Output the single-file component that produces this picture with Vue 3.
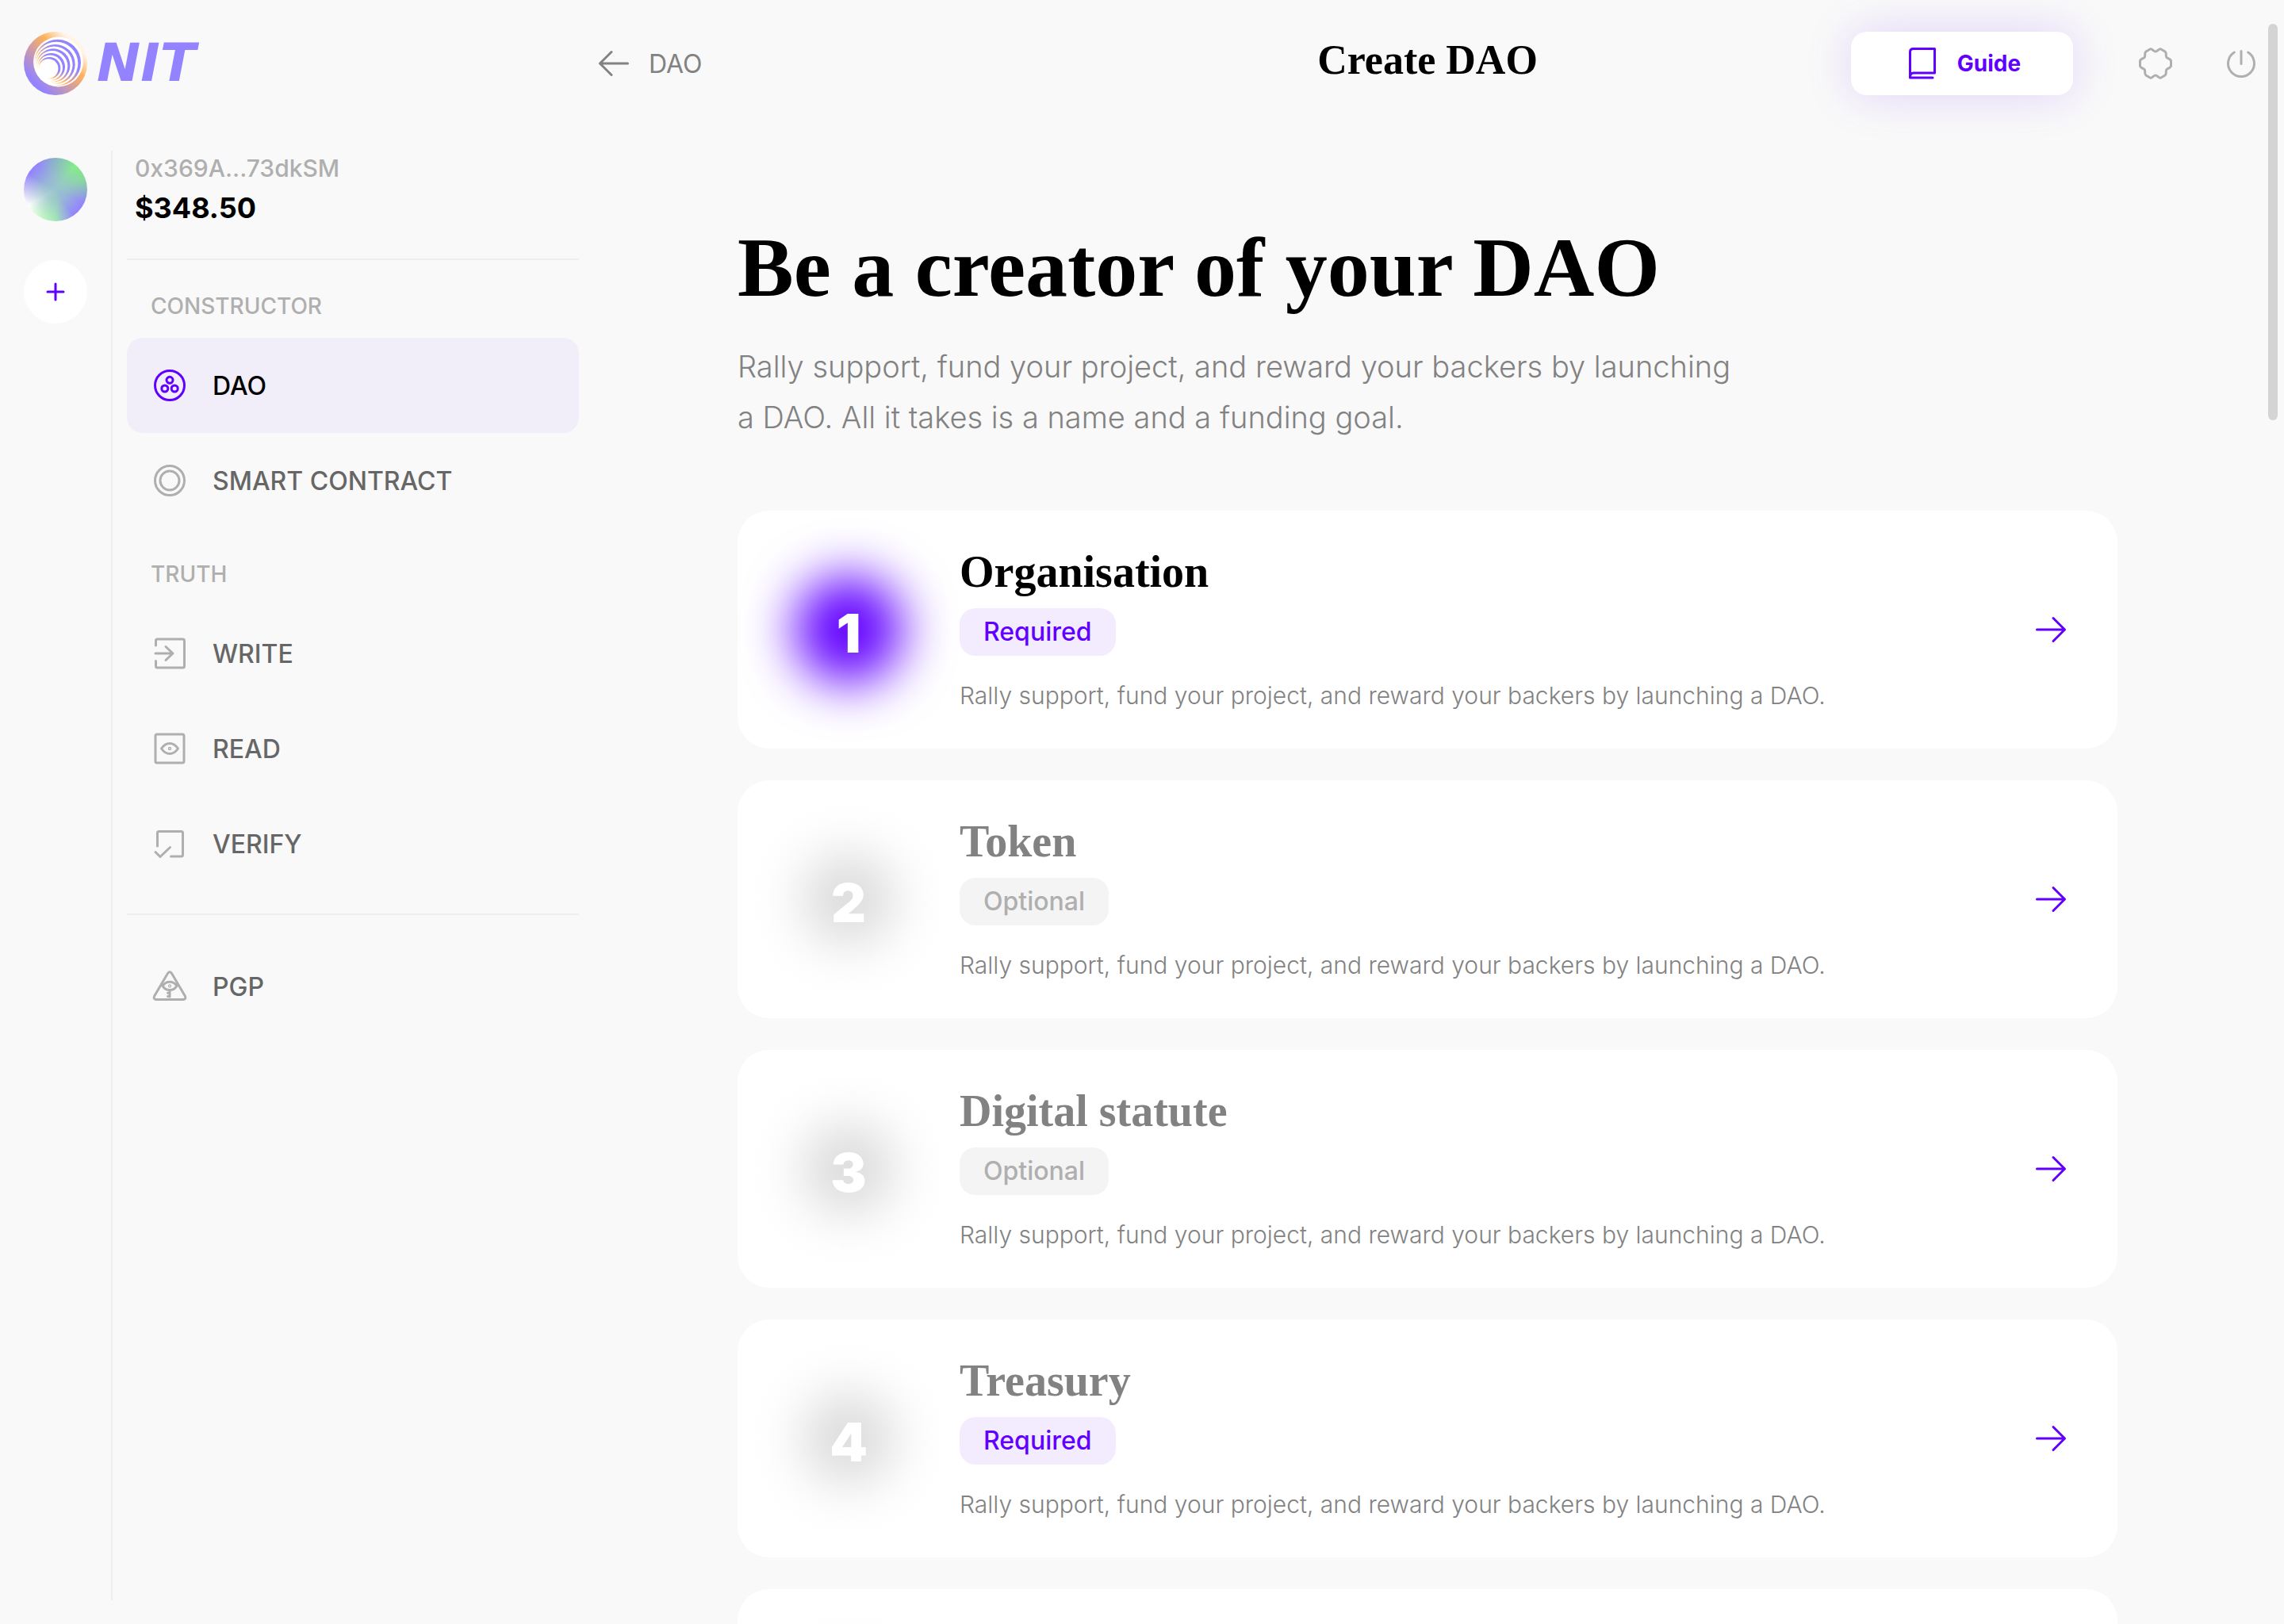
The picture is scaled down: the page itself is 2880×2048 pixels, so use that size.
<script setup>
const navGroups = [
  {
    label: 'CONSTRUCTOR',
    items: [
      { name: 'DAO', icon: 'dao', active: true },
      { name: 'SMART CONTRACT', icon: 'contract' },
    ],
  },
  {
    label: 'TRUTH',
    items: [
      { name: 'WRITE', icon: 'write' },
      { name: 'READ', icon: 'read' },
      { name: 'VERIFY', icon: 'verify' },
    ],
  },
]

const icons = {
  dao: 'M24 5.5a18.5 18.5 0 1 0 0 37a18.5 18.5 0 1 0 0-37zM24 13.3a4 4 0 1 0 0 8a4 4 0 1 0 0-8zM17.8 24a4 4 0 1 0 0 8a4 4 0 1 0 0-8zM30.2 24a4 4 0 1 0 0 8a4 4 0 1 0 0-8z',
  contract: 'M24 5.5a18.5 18.5 0 1 0 0 37a18.5 18.5 0 1 0 0-37zM24 12a12 12 0 1 0 0 24a12 12 0 1 0 0-24z',
  write: 'M6.5 14V8q0-2 2-2h32q2 0 2 2v32q0 2-2 2h-32q-2 0-2-2v-6.500M6 24h22M19 15.500l9 8.500-9 8.500',
  read: 'M8 6h32q2 0 2 2v32q0 2-2 2H8q-2 0-2-2V8q0-2 2-2zM13.500 24Q18 17.500 24 17.500T34.500 24Q30 30.500 24 30.500T13.500 24zM24 23.300a.7.7 0 1 0 0 1.400a.7.7 0 1 0 0-1.400z',
  verify: 'M8.500 27V10.500q0-2 2-2h28q2 0 2 2v27.500q0 2-2 2H25.500M6 34.500l6 6 12.500-12',
  pgp: 'M21.500 7.500q2.500-3.600 5 0L43.300 36q1.800 4-2 4.500H6.700q-3.800-.500-2-4.500zM15 23.300Q18.500 18.200 24 18.200T33 23.300Q29.500 28.600 24 28.600T15 23.300zM24 22.800a.6.6 0 1 0 0 1.200a.6.6 0 1 0 0-1.200zM24 29v8M24 32.300h-2.500M24 36.500h-2.500',
}

const summary = 'Rally support, fund your project, and reward your backers by launching a DAO.'
const steps = [
  { title: 'Organisation', required: true, active: true },
  { title: 'Token' },
  { title: 'Digital statute' },
  { title: 'Treasury', required: true },
]

// Crescents of the logo mark, from the widest to the narrowest: [cx, cy, r, inner cx, inner cy, inner r]
const rings = [
  [42.7, 39, 29.3, 41, 40, 27.3],
  [39.7, 41, 25, 38.3, 41.7, 23.3],
  [37.2, 42.5, 21.2, 35.8, 43.5, 19.5],
  [34.7, 44.3, 17.3, 33.3, 45.3, 15.7],
  [32.5, 45.8, 13.8, 31.2, 46.5, 12.2],
]
</script>

<template>
  <div class="app">
    <aside class="sidebar">
      <a class="logo" href="#">
        <svg width="80" height="80" viewBox="0 0 80 80" aria-hidden="true">
          <defs>
            <linearGradient id="band" gradientUnits="userSpaceOnUse" x1="15" y1="65" x2="64" y2="16">
              <stop offset="0" stop-color="#9383ff" />
              <stop offset="0.7" stop-color="#ffb15c" />
              <stop offset="1" stop-color="#fff4e8" />
            </linearGradient>
            <linearGradient id="ring" x1="0.8" y1="0.2" x2="0.15" y2="0.85">
              <stop offset="0" stop-color="#9383ff" />
              <stop offset="0.25" stop-color="#9383ff" />
              <stop offset="0.65" stop-color="#ffb15c" />
              <stop offset="0.92" stop-color="#ffffff" />
            </linearGradient>
          </defs>
          <circle cx="40" cy="40" r="40" fill="url(#band)" />
          <circle cx="43.5" cy="38" r="31.4" fill="#fff" />
          <g v-for="(r, i) in rings" :key="i">
            <circle :cx="r[0]" :cy="r[1]" :r="r[2]" fill="url(#ring)" />
            <circle :cx="r[3]" :cy="r[4]" :r="r[5]" fill="#fff" />
          </g>
        </svg>
        <span class="wordmark">NIT</span>
      </a>

      <div class="panel">
        <div class="rail">
          <button class="avatar" type="button" aria-label="Wallet"></button>
          <button class="add" type="button" aria-label="Add wallet">
            <svg class="icon" viewBox="0 0 48 48"><path d="M24 14v20M14 24h20" /></svg>
          </button>
        </div>

        <div class="menu">
          <div class="wallet">
            <div class="address">0x369A...73dkSM</div>
            <div class="balance">$348.50</div>
          </div>
          <nav>
            <section v-for="g in navGroups" :key="g.label">
              <h2 class="group-label">{{ g.label }}</h2>
              <a v-for="n in g.items" :key="n.name" href="#" class="nav-item" :class="{ active: n.active }">
                <svg class="icon" viewBox="0 0 48 48"><path :d="icons[n.icon]" /></svg>
                <span>{{ n.name }}</span>
              </a>
            </section>
            <section class="extra">
              <a href="#" class="nav-item">
                <svg class="icon" viewBox="0 0 48 48"><path :d="icons.pgp" /></svg>
                <span>PGP</span>
              </a>
            </section>
          </nav>
        </div>
      </div>
    </aside>

    <main class="main">
      <header class="topbar">
        <a class="back" href="#">
          <svg class="icon" viewBox="0 0 48 48"><path d="M41.500 24H6.500M21 9.500L6.500 24L21 38.500" /></svg>
          <span>DAO</span>
        </a>
        <div class="page-name">Create DAO</div>
        <div class="actions">
          <button class="guide" type="button">
            <svg class="icon" viewBox="0 0 48 48">
              <path d="M8.500 42V9.500q0-4 4-4h27V36H13q-4.500 0-4.500 5M8.500 42h28.500" />
            </svg>
            <span>Guide</span>
          </button>
          <button class="tool settings" type="button" aria-label="Settings">
            <svg class="icon" viewBox="0 0 48 48">
              <path d="M24 9C26.500 9 28 5.300 30.500 5.800L36 9C38.500 11 36.500 14 37.800 16.200C39.500 18 43.500 18.500 43.500 21V27C43.500 29.500 39.500 30 37.800 31.800C36.500 34 38.500 37 36 39L30.500 42.200C28 42.700 26.500 39 24 39C21.500 39 20 42.700 17.500 42.200L12 39C9.500 37 11.500 34 10.200 31.800C8.500 30 4.500 29.500 4.500 27V21C4.500 18.500 8.500 18 10.200 16.200C11.500 14 9.500 11 12 9L17.500 5.800C20 5.300 21.500 9 24 9z" />
            </svg>
          </button>
          <button class="tool" type="button" aria-label="Log out">
            <svg class="icon" viewBox="0 0 48 48">
              <path d="M15.300 10A16.500 16.500 0 1 0 32.700 10M24 8.500v16" />
            </svg>
          </button>
        </div>
      </header>

      <div class="content">
        <h1>Be a creator of your DAO</h1>
        <p class="intro">
          Rally support, fund your project, and reward your backers by launching
          <br />a DAO. All it takes is a name and a funding goal.
        </p>

        <div class="steps">
          <a v-for="(s, i) in steps" :key="s.title" href="#" class="card" :class="{ active: s.active }">
            <div class="badge-number"><span>{{ i + 1 }}</span></div>
            <div class="details">
              <h3>{{ s.title }}</h3>
              <span class="tag" :class="{ required: s.required }">{{ s.required ? 'Required' : 'Optional' }}</span>
              <p>{{ summary }}</p>
            </div>
            <svg class="icon go" viewBox="0 0 48 48"><path d="M6.500 24h35M27 9.500L41.500 24L27 38.500" /></svg>
          </a>
          <div class="card">
            <div class="badge-number"></div>
          </div>
        </div>
      </div>
    </main>

    <div class="scroll-thumb"></div>
  </div>
</template>

<style>
body {
  margin: 0;
  background: #f9f9f9;
}
</style>

<style scoped>
* {
  box-sizing: border-box;
}
.app {
  position: relative;
  display: flex;
  height: 100vh;
  overflow: hidden;
  background: #f9f9f9;
  color: #000;
  font-family: Inter, sans-serif;
}
a {
  color: inherit;
  text-decoration: none;
}
button {
  padding: 0;
  border: 0;
  font: inherit;
  cursor: pointer;
}
h1,
h2,
h3,
p {
  margin: 0;
}
.icon {
  display: block;
  flex: none;
  width: 48px;
  height: 48px;
  fill: none;
  stroke: currentColor;
  stroke-width: 3;
  stroke-linecap: round;
  stroke-linejoin: round;
}

/* Sidebar */
.sidebar {
  display: flex;
  flex: none;
  flex-direction: column;
  width: 730px;
  padding: 0 0 30px 30px;
}
.logo {
  display: flex;
  align-items: center;
  gap: 12px;
  height: 160px;
  margin-bottom: 30px;
}
.wordmark {
  color: #9383ff;
  font: italic 700 66px/80px "DejaVu Sans", sans-serif;
}
.panel {
  display: flex;
  flex: 1;
}
.rail {
  display: flex;
  flex-direction: column;
  gap: 49px;
  width: 112px;
  padding-top: 9px;
  border-right: 2px solid #eee;
}
.avatar,
.add {
  width: 80px;
  height: 80px;
  border-radius: 50%;
}
.avatar {
  background:
    radial-gradient(circle, #99c4cc 0%, rgba(153, 196, 204, 0.8) 25%, rgba(153, 196, 204, 0) 70%),
    conic-gradient(#8ab4c4 0deg, #84f084 40deg, #86dc98 70deg, #9383ff 115deg, #9383ff 145deg, #a4e8b4 180deg, #c2f8c2 205deg, #fff 240deg, #d8d0fa 265deg, #9383ff 300deg, #9383ff 325deg, #8ab4c4 360deg);
}
.add {
  display: grid;
  place-items: center;
  background: #fff;
  color: #6100ff;
}
.menu {
  flex: 1;
  margin-left: 18px;
}
.wallet {
  padding: 0 10px 36px;
  border-bottom: 2px solid #eee;
}
.address {
  color: #afafaf;
  font-size: 30px;
  font-weight: 500;
  line-height: 44px;
}
.balance {
  font-size: 36px;
  font-weight: 700;
  line-height: 56px;
}
.group-label {
  padding: 38px 30px 20px;
  color: #afafaf;
  font-size: 28px;
  font-weight: 500;
  line-height: 40px;
}
.nav-item {
  display: flex;
  align-items: center;
  gap: 30px;
  height: 120px;
  padding: 0 30px;
  border-radius: 20px;
  color: #666;
  font-size: 32px;
  font-weight: 500;
}
.nav-item .icon {
  color: #afafaf;
}
.nav-item.active {
  background: #f1edf9;
  color: #000;
}
.nav-item.active .icon {
  color: #6100ff;
}
.extra {
  margin-top: 28px;
  padding-top: 30px;
  border-top: 2px solid #eee;
}

/* Top bar */
.main {
  flex: 1;
  min-width: 0;
  padding-right: 10px;
}
.topbar {
  display: grid;
  grid-template-columns: 1fr auto 1fr;
  align-items: center;
  height: 160px;
  padding: 0 20px;
}
.back {
  display: flex;
  align-items: center;
  gap: 20px;
  color: #828282;
  font-size: 32px;
}
.page-name {
  padding-bottom: 8px;
  font: 700 52px/64px "Liberation Serif", serif;
}
.actions {
  display: flex;
  align-items: center;
  justify-content: flex-end;
}
.guide {
  display: flex;
  align-items: center;
  justify-content: center;
  gap: 20px;
  width: 280px;
  height: 80px;
  border-radius: 20px;
  background: #fff;
  box-shadow: 0 0 60px rgba(97, 0, 255, 0.16);
  color: #6100ff;
  font-size: 28px;
  font-weight: 700;
}
.tool {
  margin-left: 60px;
  background: none;
  color: #afafaf;
}
.settings {
  margin-left: 80px;
}

/* Content */
.content {
  max-width: 1740px;
  margin: 0 auto;
  padding-top: 112px;
}
h1 {
  font: 700 106px/132px "Liberation Serif", serif;
}
.intro {
  margin-top: 26px;
  color: #828282;
  font-size: 38px;
  font-weight: 300;
  line-height: 64px;
}
.steps {
  display: flex;
  flex-direction: column;
  gap: 40px;
  margin-top: 86px;
}
.card {
  display: flex;
  align-items: center;
  min-height: 300px;
  padding-right: 60px;
  border-radius: 40px;
  background: #fff;
}
.badge-number {
  position: relative;
  display: grid;
  flex: none;
  place-items: center;
  width: 280px;
  padding-top: 8px;
  color: #fff;
  font-size: 68px;
  font-weight: 900;
  line-height: 72px;
}
.badge-number::before {
  position: absolute;
  inset: 0;
  width: 116px;
  height: 116px;
  margin: auto;
  border-radius: 50%;
  background: #dadada;
  content: "";
  filter: blur(32px);
}
.badge-number span {
  position: relative;
}
.active .badge-number::before {
  width: 136px;
  height: 136px;
  background: #6100ff;
}
.details {
  flex: 1;
  color: #828282;
}
.details h3 {
  font: 700 56px/68px "Liberation Serif", serif;
}
.active h3 {
  color: #000;
}
.tag {
  display: inline-block;
  margin: 12px 0 26px;
  padding: 0 30px;
  border-radius: 20px;
  background: #f4f4f4;
  color: #afafaf;
  font-size: 32px;
  font-weight: 500;
  line-height: 60px;
  vertical-align: top;
}
.tag.required {
  background: #f3ecff;
  color: #6100ff;
}
.details p {
  font-size: 30px;
  font-weight: 300;
  line-height: 48px;
}
.go {
  color: #6100ff;
}

/* Overlay scrollbar of the page */
.scroll-thumb {
  position: absolute;
  top: 30px;
  right: 8px;
  width: 12px;
  height: 500px;
  border-radius: 6px;
  background: #d4d4d4;
}
</style>
